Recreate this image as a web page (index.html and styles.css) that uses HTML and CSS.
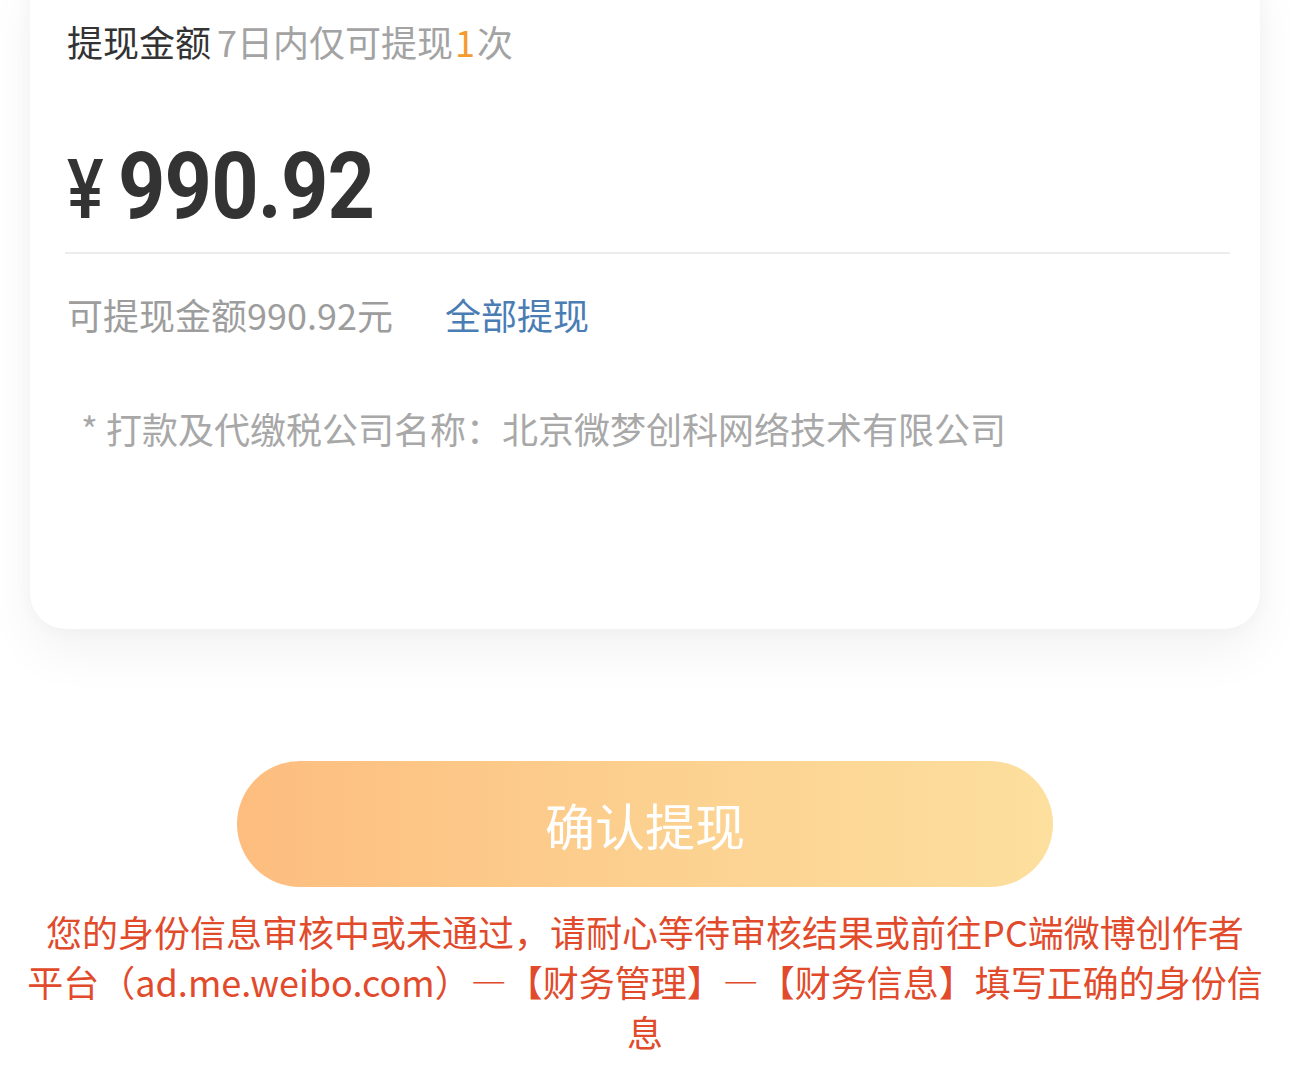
FILE: index.html
```html
<!DOCTYPE html>
<html lang="zh-CN">
<head>
    <meta charset="UTF-8">
    <meta name="viewport" content="width=device-width, initial-scale=1.0">
    <title>提现</title>
    <link rel="stylesheet" href="styles.css">
</head>
<body>
    <div class="page">
        <div class="card">
            <div class="card-title">
                提现金额<span class="limit">7日内仅可提现<em>1</em>次</span>
            </div>

            <div class="amount">
                <span class="currency">¥</span><span class="value">990.92</span>
            </div>

            <div class="available">
                <span class="available-text">可提现金额990.92元</span>
                <a href="#" class="withdraw-all">全部提现</a>
            </div>

            <p class="note">* 打款及代缴税公司名称：北京微梦创科网络技术有限公司</p>
        </div>

        <button type="button" class="btn-confirm">确认提现</button>

        <p class="warning">您的身份信息审核中或未通过，请耐心等待审核结果或前往PC端微博创作者<br>平台（ad.me.weibo.com）—【财务管理】—【财务信息】填写正确的身份信息</p>
    </div>
</body>
</html>
```

FILE: styles.css
```css
* {
    margin: 0;
    padding: 0;
    box-sizing: border-box;
}

body {
    font-family: "Noto Sans CJK SC", "Noto Sans", sans-serif;
    background: #ffffff;
    color: #333333;
}

.page {
    padding: 0 30px;
}

.card {
    margin-top: -40px;
    background: #ffffff;
    border-radius: 36px;
    box-shadow: 0 24px 50px rgba(0, 0, 0, 0.05), 0 0 20px rgba(0, 0, 0, 0.03);
    padding: 56px 30px 176px 35px;
}

.card-title {
    font-size: 36px;
    line-height: 50px;
    color: #333333;
    padding-left: 2px;
}

.limit {
    color: #a3a3a3;
    margin-left: 6px;
}

.limit em {
    font-style: normal;
    color: #f39b2d;
    padding: 0 2px;
}

.amount {
    display: flex;
    align-items: baseline;
    padding-top: 76px;
    padding-left: 2px;
    height: 188px;
    border-bottom: 2px solid #ececec;
    font-family: Roboto, "Liberation Sans", sans-serif;
    font-weight: bold;
    color: #333333;
    line-height: 90px;
}

.currency {
    display: inline-block;
    font-size: 84px;
    font-weight: 500;
    transform: scaleX(0.82);
    transform-origin: left bottom;
    margin-right: 6px;
}

.value {
    display: inline-block;
    font-size: 93px;
    letter-spacing: -1px;
    transform: scaleX(0.89);
    transform-origin: left bottom;
}

.available {
    display: flex;
    align-items: center;
    margin-top: 35px;
    font-size: 36px;
    line-height: 50px;
    padding-left: 2px;
}

.available-text {
    color: #9d9d9d;
}

.withdraw-all {
    color: #4b7db5;
    text-decoration: none;
    margin-left: 52px;
}

.note {
    margin-top: 64px;
    font-size: 36px;
    line-height: 50px;
    color: #a8a8a8;
    padding-left: 16px;
}

.btn-confirm {
    display: block;
    width: 816px;
    height: 126px;
    margin: 132px auto 0;
    border: none;
    border-radius: 63px;
    background: linear-gradient(90deg, #fdbd7f 0%, #fcd08f 50%, #fddf9e 100%);
    color: #ffffff;
    font-family: "Noto Sans CJK SC", sans-serif;
    font-size: 50px;
    cursor: pointer;
}

.warning {
    margin: 19px -15px 0;
    font-size: 36px;
    line-height: 50px;
    color: #e14b2c;
    text-align: center;
}
```
